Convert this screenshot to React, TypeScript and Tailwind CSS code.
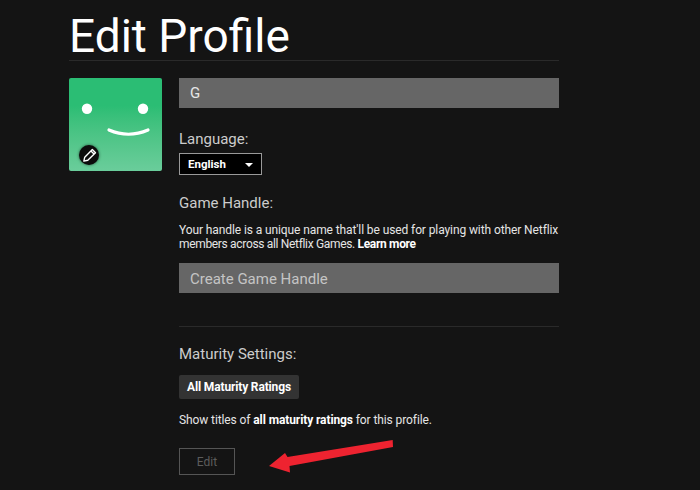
const font = "font-['Roboto',sans-serif]"

function Avatar() {
  return (
    <div className="relative h-[93px] w-[93px] shrink-0 rounded-[2px] bg-gradient-to-b from-[#2bbd74] from-30% to-[#6acd9b]">
      <svg className="absolute inset-0" width="93" height="93" viewBox="0 0 93 93" fill="none">
        <circle cx="18" cy="30.7" r="5.2" fill="#fff" />
        <circle cx="74" cy="30.7" r="5.2" fill="#fff" />
        <path d="M40 52 Q59.5 60.5 79 52" stroke="#fff" strokeWidth="3.2" strokeLinecap="round" />
      </svg>
      <div className="absolute left-[10px] top-[67px] flex h-[20px] w-[20px] items-center justify-center rounded-full bg-[#0c0c0c] shadow-[0_0_3px_rgba(0,0,0,0.6)]">
        <svg width="17" height="17" viewBox="0 0 15 15" fill="none" stroke="#fff" strokeWidth="1.2" strokeLinejoin="round">
          <path d="M2.5 12.5 L3.3 9 L10 2.2 L12.8 5 L6 11.7 Z" />
          <path d="M8.8 3.5 L11.5 6.2" />
        </svg>
      </div>
    </div>
  )
}

function Label({ children, className }: { children: string; className: string }) {
  return <div className={`text-[15px] leading-[22px] text-[#cccccc] ${className}`}>{children}</div>
}

export default function App() {
  return (
    <div className={`relative h-[490px] w-[700px] overflow-hidden bg-[#141414] pl-[69px] ${font}`}>
      <div className="w-[490px]">
        <h1 className="h-[61px] border-b border-[#2a2a2a] pt-[1px] text-[46px] font-normal leading-[70px] text-white">
          Edit Profile
        </h1>
        <div className="mt-[17px] flex gap-[17px]">
          <Avatar />
          <div className="w-[380px]">
            <div className="flex h-[30px] items-center bg-[#666666] pl-[11px] pt-[1px] text-[15px] text-[#e6e6e6]">G</div>

            <Label className="mt-[20px]">Language:</Label>
            <div className="mt-[3px] flex h-[22px] w-[83px] items-center justify-between border border-[#999999] bg-black pl-[8px] pr-[8px] pt-[2px] text-[11.5px] font-bold text-white">
              English
              <span className="h-0 w-0 border-x-[4px] border-t-[4px] border-x-transparent border-t-white" />
            </div>

            <Label className="mt-[17px]">Game Handle:</Label>
            <p className="mt-[9px] whitespace-nowrap text-[12px] leading-[14px] tracking-[-0.1px] text-[#e5e5e5]">
              Your handle is a unique name that'll be used for playing with other Netflix
              <br />
              <span className="tracking-[-0.33px]">
                members across all Netflix Games. <b className="font-bold text-white">Learn more</b>
              </span>
            </p>
            <div className="mt-[12px] flex h-[30px] items-center bg-[#666666] pl-[11px] pt-[2px] text-[15px] text-[#c4c4c4]">
              Create Game Handle
            </div>

            <div className="mt-[33px] border-t border-[#2a2a2a]" />

            <Label className="mt-[16px]">Maturity Settings:</Label>
            <div className="mt-[10px] flex h-[24px] w-[120px] items-center justify-center rounded-[2px] bg-[#333333] text-[12px] font-bold tracking-[-0.15px] text-white">
              All Maturity Ratings
            </div>
            <p className="mt-[13px] text-[12px] leading-[16px] tracking-[-0.1px] text-[#e5e5e5]">
              Show titles of <b className="font-bold text-white">all maturity ratings</b> for this profile.
            </p>
            <div className="mt-[20px] flex h-[27px] w-[56px] items-center justify-center border border-[#555555] text-[12px] text-[#5c5c5c]">
              Edit
            </div>
          </div>
        </div>
      </div>

      <svg className="absolute left-0 top-0" width="700" height="490" fill="none">
        <path d="M392.7 440 L287.5 457 L285 453 L269 466 L290 472.5 L289.5 466 L393 447 Z" fill="#ee2330" />
      </svg>
    </div>
  )
}
